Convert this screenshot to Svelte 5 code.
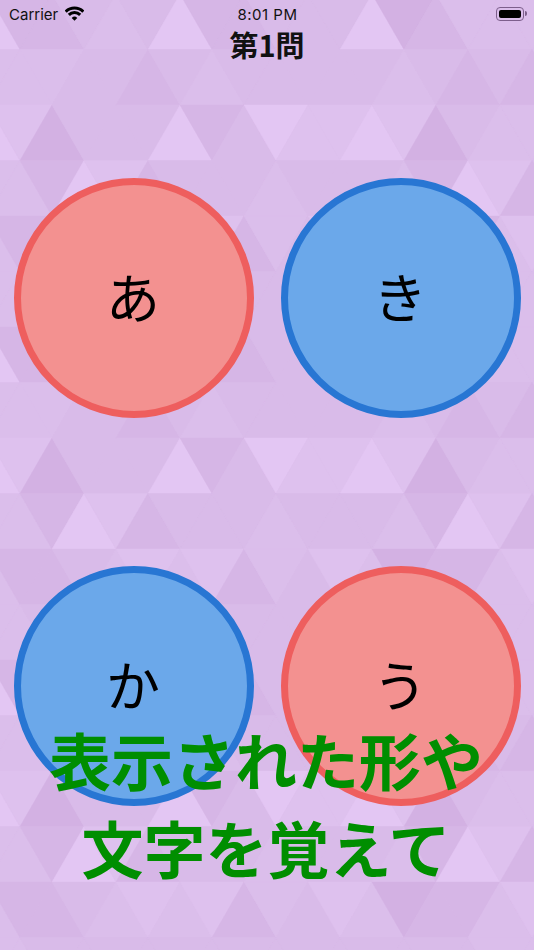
<script lang="ts">
  // background tile: 6 rows of 18 triangles, repeats every 333px
  const shades = ['#d3b1e3', '#d6b6e6', '#d9bbe9', '#dbbeeb', '#dec1ee', '#e3c6f3']
  const tile = [
    '511232511222501333',
    '333221232222232121',
    '540222512544540233',
    '331541222322231541',
    '311234341324301134',
    '332222222222222233'
  ]
  const rowH = 55.5
  const half = 32

  const triangles = []
  for (let r = 0; r < 18; r++) {
    const top = -6 + r * rowH
    const row = tile[r % 6]
    for (let k = 0; k < 18; k++) {
      const c = -12 + half * k
      // even rows: triangles at even k point up, odd rows the other way round
      const up = (k + r) % 2 === 0
      const points = up
        ? `${c},${top} ${c - half},${top + rowH} ${c + half},${top + rowH}`
        : `${c},${top + rowH} ${c - half},${top} ${c + half},${top}`
      triangles.push({ points, fill: shades[Number(row[k])] })
    }
  }

  const answers = [
    { label: 'あ', color: 'red' },
    { label: 'き', color: 'blue' },
    { label: 'か', color: 'blue' },
    { label: 'う', color: 'red' }
  ]
</script>

<div class="page">
  <svg class="bg" width="534" height="950" viewBox="0 0 534 950" aria-hidden="true">
    {#each triangles as t}
      <polygon points={t.points} fill={t.fill} stroke={t.fill} stroke-width="0.4" />
    {/each}
  </svg>

  <div class="status">
    <div class="status-left">
      <span>Carrier</span>
      <svg class="wifi" width="19" height="15" viewBox="0 0 19 15">
        <path d="M0.66 5.66A12.5 12.5 0 0 1 18.34 5.66" fill="none" stroke="#000" stroke-width="3" />
        <path d="M3.84 8.84A8 8 0 0 1 15.16 8.84" fill="none" stroke="#000" stroke-width="3" />
        <path d="M9.5 14.8L6.7 11.9A4 4 0 0 1 12.3 11.9Z" fill="#000" />
      </svg>
    </div>
    <span class="time">8:01 PM</span>
    <div class="battery"><div class="battery-fill"></div></div>
  </div>

  <h1 class="title">第1問</h1>

  <div class="answers">
    {#each answers as a}
      <button class="circle {a.color}">{a.label}</button>
    {/each}
  </div>

  <div class="hint">
    <p>表示された形や</p>
    <p>文字を覚えて</p>
  </div>
</div>

<style>
  :global(body) {
    margin: 0;
  }

  .page {
    position: relative;
    width: 534px;
    height: 950px;
    overflow: hidden;
    background: #dabdeb;
    font-family: 'Noto Sans CJK JP', sans-serif;
  }

  .bg {
    position: absolute;
    inset: 0;
  }

  .status {
    position: relative;
    height: 28px;
    display: grid;
    grid-template-columns: 1fr auto 1fr;
    align-items: center;
    padding: 0 8px 0 9px;
    font-family: Inter, sans-serif;
    font-size: 15px;
    color: #111;
  }

  .status-left {
    display: flex;
    align-items: center;
    gap: 7px;
  }

  .wifi {
    margin-top: -2px;
  }

  .time {
    letter-spacing: 0.5px;
  }

  .battery {
    position: relative;
    box-sizing: border-box;
    justify-self: end;
    width: 28px;
    height: 14px;
    margin-right: 2px;
    margin-top: -1px;
    padding: 2px;
    border: 1px solid #7d5f8c;
    border-radius: 4px;
  }

  .battery::after {
    content: '';
    position: absolute;
    right: -3.5px;
    top: 3px;
    width: 2px;
    height: 5px;
    border-radius: 0 2px 2px 0;
    background: #7d5f8c;
  }

  .battery-fill {
    height: 100%;
    border-radius: 2px;
    background: #000;
  }

  .title {
    position: relative;
    margin: 0;
    height: 33px;
    line-height: 33px;
    text-align: center;
    font-size: 29px;
    font-weight: 700;
    color: #111;
  }

  .answers {
    position: relative;
    display: grid;
    grid-template-columns: 240px 240px;
    column-gap: 27px;
    row-gap: 148px;
    padding: 117px 0 0 14px;
  }

  .circle {
    box-sizing: border-box;
    width: 240px;
    height: 240px;
    padding: 0 2px 4px 0;
    border-radius: 50%;
    border: 7px solid;
    font-family: inherit;
    font-size: 54px;
    line-height: 1;
    color: #000;
  }

  .red {
    background: #f39190;
    border-color: #ee5e5e;
  }

  .blue {
    background: #6ba8ea;
    border-color: #2876d3;
  }

  .hint {
    position: absolute;
    left: 0;
    right: 2px;
    top: 715px;
    text-align: center;
    font-size: 62px;
    font-weight: 700;
    line-height: 88px;
    color: #008e00;
  }

  .hint p {
    margin: 0;
  }
</style>
